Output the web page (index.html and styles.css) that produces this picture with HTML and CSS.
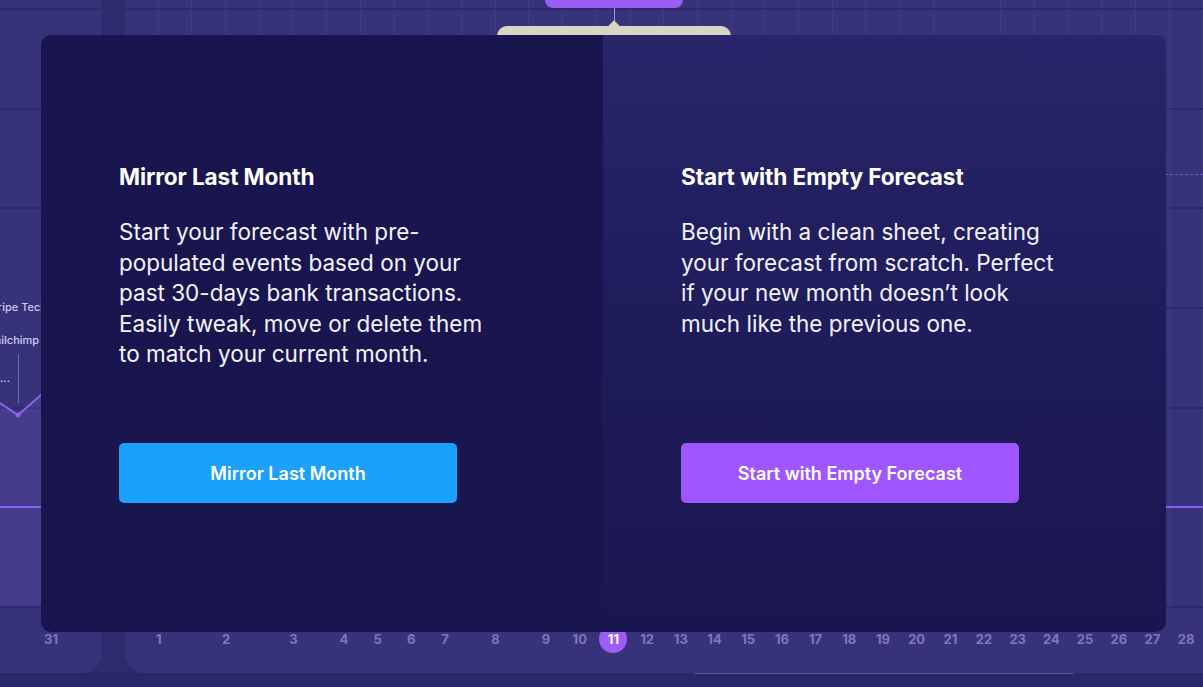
FILE: index.html
```html
<!DOCTYPE html>
<html lang="en">
<head>
<meta charset="utf-8">
<title>Choose how to start your forecast</title>
<link rel="stylesheet" href="styles.css">
</head>
<body>
<div class="screen">
  <div class="panels">
    <aside class="side">
      <div class="chart">
        <div class="cap"></div>
        <div class="row"></div>
        <div class="row"></div>
        <div class="row"></div>
        <div class="row"></div>
        <div class="row"></div>
        <div class="row balance"></div>
        <svg class="plot" width="102" height="606" viewBox="0 0 102 606">
          <polygon points="0,403 18,415 41,395 102,360 102,606 0,606" fill="rgba(140,110,235,0.16)"/>
          <polyline points="0,403 18,415 41,395 102,360" fill="none" stroke="#8f62f2" stroke-width="2"/>
          <circle cx="18" cy="415" r="2.5" fill="#8f62f2"/>
        </svg>
        <span class="evt evt-stripe">Stripe Technologies</span>
        <span class="evt evt-mail">Mailchimp</span>
        <span class="evt-box">Payrol...</span>
      </div>
      <div class="dates side-dates"><span>31</span></div>
    </aside>
    <main class="board">
      <div class="chart grid">
        <div class="cap"></div>
        <div class="row"></div>
        <div class="row"><div class="dash"></div></div>
        <div class="row"></div>
        <div class="row"></div>
        <div class="row"></div>
        <div class="row balance"></div>
      </div>
      <div class="dates days">
        <span class="s2">1</span><span class="s2">2</span><span class="s2">3</span>
        <span>4</span><span>5</span><span>6</span><span>7</span>
        <span class="s2">8</span><span>9</span><span>10</span>
        <span class="today"><b>11</b></span>
        <span>12</span><span>13</span><span>14</span><span>15</span><span>16</span>
        <span>17</span><span>18</span><span>19</span><span>20</span><span>21</span>
        <span>22</span><span>23</span><span>24</span><span>25</span><span>26</span>
        <span>27</span><span>28</span>
      </div>
    </main>
  </div>
  <div class="footer"><div class="scroll-thumb"></div></div>

  <div class="pill"></div>
  <div class="stem"></div>
  <div class="tip"></div>

  <section class="modal">
    <div class="option mirror">
      <h2>Mirror Last Month</h2>
      <p>Start your forecast with pre-populated events based on your past 30-days bank transactions. Easily tweak, move or delete them to match your current month.</p>
      <button class="btn btn-blue">Mirror Last Month</button>
    </div>
    <div class="option empty">
      <h2>Start with Empty Forecast</h2>
      <p>Begin with a clean sheet, creating your forecast from scratch. Perfect if your new month doesn’t look much like the previous one.</p>
      <button class="btn btn-purple">Start with Empty Forecast</button>
    </div>
  </section>
</div>
</body>
</html>
```

FILE: styles.css
```css
* { box-sizing: border-box; }

html, body {
  margin: 0;
  padding: 0;
  width: 1203px;
  height: 687px;
  overflow: hidden;
  background: #29266a;
  font-family: Inter, "Noto Sans", "Liberation Sans", sans-serif;
}

.screen {
  position: relative;
  width: 1203px;
  height: 687px;
  display: flex;
  flex-direction: column;
  background: #29266a;
}

.panels {
  height: 673px;
  display: grid;
  grid-template-columns: 102px 1fr;
  column-gap: 23px;
  background: #2d2a6d;
}

.side,
.board {
  background: #37337a;
  display: flex;
  flex-direction: column;
  overflow: hidden;
}

.side { border-bottom-right-radius: 20px; }
.board { border-bottom-left-radius: 20px; }

.chart {
  position: relative;
  height: 606px;
  display: flex;
  flex-direction: column;
}

.chart.grid {
  background-image: repeating-linear-gradient(to right,
    transparent 0, transparent 32.7px,
    rgba(255, 255, 255, 0.045) 32.7px, rgba(255, 255, 255, 0.045) 33.7px);
}

.cap { height: 8px; }

.row {
  flex: 1;
  border-top: 2px solid #2e2a6d;
}

.row.balance { border-top-color: #8a5cf0; }

.dash {
  margin-top: 64px;
  border-top: 1px dashed #6d58cf;
}

.plot {
  position: absolute;
  left: 0;
  top: 0;
}

.evt {
  position: absolute;
  font-size: 11px;
  font-weight: 500;
  color: #cfcaf2;
  white-space: nowrap;
}

.evt-stripe { top: 300px; left: -13px; }
.evt-mail { top: 333px; left: -15px; }

.evt-box {
  position: absolute;
  top: 354px;
  left: -40px;
  width: 59px;
  height: 49px;
  border-right: 1px solid #6f69ad;
  font-size: 11px;
  font-weight: 500;
  color: #d8d4f4;
  line-height: 49px;
  text-align: right;
  padding-right: 8px;
  white-space: nowrap;
  overflow: hidden;
}

.dates {
  flex: 1;
  border-top: 2px solid #2e2a6d;
  padding-top: 17px;
  font-size: 13px;
  font-weight: 700;
  color: #7d77bf;
}

.side-dates {
  text-align: center;
  line-height: 28px;
}

.days {
  display: grid;
  grid-template-columns: repeat(32, 33.7px);
  align-content: start;
}

.days span {
  text-align: center;
  line-height: 28px;
  height: 28px;
}

.days .s2 { grid-column: span 2; }

.today b {
  display: inline-block;
  width: 28px;
  height: 28px;
  border-radius: 50%;
  background: #9c5cf6;
  color: #ffffff;
  font-weight: 700;
}

.footer {
  flex: 1;
  padding-left: 695px;
}

.scroll-thumb {
  width: 378px;
  height: 1px;
  background: #5c57a4;
}

/* overlays on top of the calendar */
.pill {
  position: absolute;
  left: 545px;
  top: -12px;
  width: 138px;
  height: 20px;
  border-radius: 8px;
  background: #9a5df6;
}

.stem {
  position: absolute;
  left: 614px;
  top: 8px;
  width: 1px;
  height: 16px;
  background: #a98df2;
}

.tip {
  position: absolute;
  left: 497px;
  top: 26px;
  width: 234px;
  height: 30px;
  border-radius: 10px;
  background: #d9d5c4;
}

.tip::before {
  content: "";
  position: absolute;
  left: 113px;
  top: -4px;
  width: 8px;
  height: 8px;
  background: #d9d5c4;
  transform: rotate(45deg);
}

.modal {
  position: absolute;
  left: 41px;
  top: 35px;
  width: 1125px;
  height: 597px;
  border-radius: 10px;
  overflow: hidden;
  display: grid;
  grid-template-columns: 562px 1fr;
}

.option {
  display: flex;
  flex-direction: column;
  align-items: flex-start;
  padding: 129px 78px 129px;
  color: #ffffff;
}

.mirror { background: #19164f; }

.empty {
  background: linear-gradient(180deg, #28256a 0%, #1e1b5a 55%, #19164f 100%);
}

.option h2 {
  margin: 0 0 27px;
  font-size: 22.6px;
  line-height: 26px;
  font-weight: 700;
  letter-spacing: -0.1px;
}

.option p {
  margin: 0;
  max-width: 382px;
  font-size: 22.5px;
  line-height: 30.5px;
  font-weight: 400;
  color: #f4f3fb;
}

.btn {
  margin-top: auto;
  width: 338px;
  height: 60px;
  border: none;
  border-radius: 5px;
  color: #ffffff;
  font-family: Inter, "Noto Sans", "Liberation Sans", sans-serif;
  font-size: 18px;
  font-weight: 600;
  cursor: pointer;
}

.btn-blue { background: #1ba1fc; }
.btn-purple { background: #a056fe; }
```
